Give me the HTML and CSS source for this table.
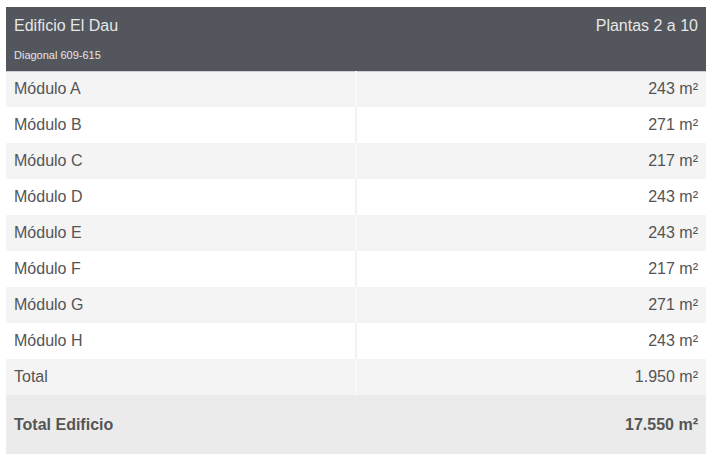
FILE: index.html
```html
<!DOCTYPE html>
<html lang="es">
<head>
<meta charset="utf-8">
<link rel="stylesheet" href="styles.css">
</head>
<body>
<table class="tbl">
  <thead>
    <tr class="head">
      <th class="head-l">
        <div class="title">Edificio El Dau</div>
        <div class="sub">Diagonal 609-615</div>
      </th>
      <th class="head-r">Plantas 2 a 10</th>
    </tr>
  </thead>
  <tbody>
    <tr class="odd"><td>Módulo A</td><td class="num">243 m²</td></tr>
    <tr><td>Módulo B</td><td class="num">271 m²</td></tr>
    <tr class="odd"><td>Módulo C</td><td class="num">217 m²</td></tr>
    <tr><td>Módulo D</td><td class="num">243 m²</td></tr>
    <tr class="odd"><td>Módulo E</td><td class="num">243 m²</td></tr>
    <tr><td>Módulo F</td><td class="num">217 m²</td></tr>
    <tr class="odd"><td>Módulo G</td><td class="num">271 m²</td></tr>
    <tr><td>Módulo H</td><td class="num">243 m²</td></tr>
    <tr class="odd total"><td>Total</td><td class="num">1.950 m²</td></tr>
    <tr class="grand"><td>Total Edificio</td><td class="num">17.550 m²</td></tr>
  </tbody>
</table>
</body>
</html>
```

FILE: styles.css
```css
html, body {
  margin: 0;
  padding: 0;
  background: #ffffff;
}
body {
  padding: 7px 7px 0 6px;
  font-family: "Liberation Sans", Arial, sans-serif;
  color: #555555;
}
.tbl {
  width: 700px;
  border-collapse: collapse;
  table-layout: fixed;
}
.head {
  background: #53565c;
  color: #e6e6e6;
  border-bottom: 1px solid #cfcfcf;
}
.head th {
  font-weight: normal;
  vertical-align: top;
  box-sizing: border-box;
  height: 64px;
  padding: 10px 8px 0 8px;
}
.head-l {
  text-align: left;
}
.head-r {
  text-align: right;
  font-size: 16px;
  line-height: 18px;
}
.title {
  font-size: 16px;
  line-height: 18px;
}
.sub {
  font-size: 11px;
  line-height: 13px;
  padding-top: 14px;
}
td {
  font-size: 16px;
  height: 36px;
  padding: 0 8px;
  box-sizing: border-box;
  vertical-align: middle;
}
td + td {
  border-left: 2px solid #f2f2f2;
}
.num {
  text-align: right;
}
.odd {
  background: #f4f4f4;
}
.odd td + td {
  border-left-color: #f8f8f8;
}
.grand {
  background: #ebebeb;
  font-weight: bold;
}
.grand td {
  height: 59px;
}
.grand td + td {
  border-left: none;
}
```
